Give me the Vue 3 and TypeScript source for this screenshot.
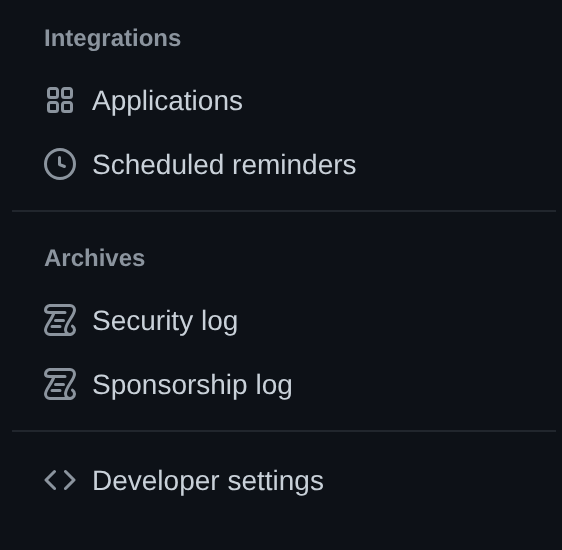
<script setup lang="ts">
interface Item { label: string; icon: string }
const groups: { title: string; items: Item[] }[] = [
  {
    title: 'Integrations',
    items: [
      { label: 'Applications', icon: 'apps' },
      { label: 'Scheduled reminders', icon: 'clock' },
    ],
  },
  {
    title: 'Archives',
    items: [
      { label: 'Security log', icon: 'log' },
      { label: 'Sponsorship log', icon: 'log' },
    ],
  },
  { title: '', items: [{ label: 'Developer settings', icon: 'code' }] },
]
</script>

<template>
  <nav class="menu">
    <section v-for="(g, i) in groups" :key="i" class="group" :class="{ untitled: !g.title }">
      <h2 v-if="g.title" class="heading">{{ g.title }}</h2>
      <ul class="list">
        <li v-for="item in g.items" :key="item.label" class="row">
          <svg class="icon" viewBox="0 0 16 16" width="32" height="32" aria-hidden="true">
            <path v-if="item.icon === 'apps'" fill="currentColor" d="M1.5 3.25c0-.966.784-1.75 1.75-1.75h2.5c.966 0 1.75.784 1.75 1.75v2.5A1.75 1.75 0 0 1 5.75 7.5h-2.5A1.75 1.75 0 0 1 1.5 5.75Zm7 0c0-.966.784-1.75 1.75-1.75h2.5c.966 0 1.75.784 1.75 1.75v2.5a1.75 1.75 0 0 1-1.75 1.75h-2.5A1.75 1.75 0 0 1 8.5 5.75Zm-7 7c0-.966.784-1.75 1.75-1.75h2.5c.966 0 1.75.784 1.75 1.75v2.5a1.75 1.75 0 0 1-1.75 1.75h-2.5a1.75 1.75 0 0 1-1.75-1.75Zm7 0c0-.966.784-1.75 1.75-1.75h2.5c.966 0 1.75.784 1.75 1.75v2.5a1.75 1.75 0 0 1-1.75 1.75h-2.5a1.75 1.75 0 0 1-1.75-1.75ZM3.25 3a.25.25 0 0 0-.25.25v2.5c0 .138.112.25.25.25h2.5A.25.25 0 0 0 6 5.75v-2.5A.25.25 0 0 0 5.75 3Zm7 0a.25.25 0 0 0-.25.25v2.5c0 .138.112.25.25.25h2.5a.25.25 0 0 0 .25-.25v-2.5a.25.25 0 0 0-.25-.25Zm-7 7a.25.25 0 0 0-.25.25v2.5c0 .138.112.25.25.25h2.5a.25.25 0 0 0 .25-.25v-2.5a.25.25 0 0 0-.25-.25Zm7 0a.25.25 0 0 0-.25.25v2.5c0 .138.112.25.25.25h2.5a.25.25 0 0 0 .25-.25v-2.5a.25.25 0 0 0-.25-.25Z" />
            <path v-else-if="item.icon === 'clock'" fill="currentColor" d="M8 0a8 8 0 1 1 0 16A8 8 0 0 1 8 0ZM1.5 8a6.5 6.5 0 1 0 13 0 6.5 6.5 0 0 0-13 0Zm7-3.25v2.992l2.028.812a.75.75 0 0 1-.557 1.392l-2.5-1A.751.751 0 0 1 7 8.25v-3.5a.75.75 0 0 1 1.5 0Z" />
            <path v-else-if="item.icon === 'code'" fill="currentColor" d="m11.28 3.22 4.25 4.25a.75.75 0 0 1 0 1.06l-4.25 4.25a.749.749 0 0 1-1.275-.326.749.749 0 0 1 .215-.734L13.94 8l-3.72-3.72a.749.749 0 0 1 .326-1.275.749.749 0 0 1 .734.215Zm-6.56 0a.751.751 0 0 1 1.042.018.751.751 0 0 1 .018 1.042L2.06 8l3.72 3.72a.749.749 0 0 1-.326 1.275.749.749 0 0 1-.734-.215L.47 8.53a.75.75 0 0 1 0-1.06Z" />
            <g v-else fill="none" stroke="currentColor" stroke-width="1.5" stroke-linecap="round">
              <path d="M3 .75H13A2.25 2.25 0 0 1 15.25 3C15.25 5.8 10.75 9.6 10.75 13A2.25 2.25 0 1 0 14.25 11.1" />
              <path d="M13 15.25H3A2.25 2.25 0 0 1 .75 13C.75 10.6 4 7.8 5 4.25H2.6C1.4 4.25.75 3.9.75 3A2.25 2.25 0 0 1 3 .75" />
              <path d="M5 4.25H10.5M5.75 8.25H9.75M4 11.25H8" />
            </g>
          </svg>
          <span class="label">{{ item.label }}</span>
        </li>
      </ul>
    </section>
  </nav>
</template>

<style scoped>
.menu {
  width: 562px;
  height: 550px;
  box-sizing: border-box;
  padding: 14px 6px 0 12px;
  font-family: "Liberation Sans", Arial, sans-serif;
  text-rendering: geometricPrecision;
  background: #0d1117;
  color: #c9d1d9;
  overflow: hidden;
}
.group + .group {
  margin-top: 14px;
  border-top: 2px solid #21262d;
  padding-top: 22px;
}
.group.untitled {
  padding-top: 16px;
}
.heading {
  margin: 0 0 6px;
  padding: 0 32px;
  font-size: 24px;
  line-height: 50px;
  font-weight: 700;
  color: #8b949e;
  height: 48px;
  filter: blur(0.4px);
}
.list {
  list-style: none;
  margin: 0;
  padding: 0;
}
.row {
  display: flex;
  align-items: center;
  gap: 16px;
  height: 64px;
  padding: 0 32px;
}
.icon {
  flex: none;
  color: #8b949e;
  filter: blur(0.4px);
}
.label {
  font-size: 28px;
  line-height: 40px;
  padding-top: 2px;
  filter: blur(0.4px);
}
</style>

<style>
html, body { background: #0d1117; }
</style>
